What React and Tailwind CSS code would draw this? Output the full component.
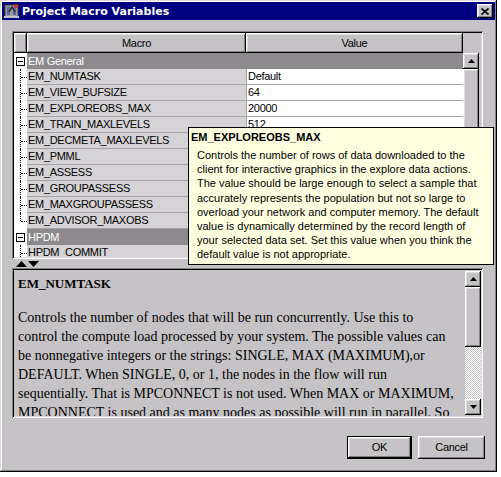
const raised =
  "shadow-[inset_-1px_-1px_#000,inset_1px_1px_#fff,inset_-2px_-2px_#848284,inset_2px_2px_#dedbde]"
const sunken =
  "shadow-[inset_1px_1px_#848284,inset_-1px_-1px_#fff,inset_2px_2px_#000,inset_-2px_-2px_#dedbde]"

const rows = [
  { group: "EM General" },
  { name: "EM_NUMTASK", value: "Default" },
  { name: "EM_VIEW_BUFSIZE", value: "64" },
  { name: "EM_EXPLOREOBS_MAX", value: "20000" },
  { name: "EM_TRAIN_MAXLEVELS", value: "512" },
  { name: "EM_DECMETA_MAXLEVELS", value: "" },
  { name: "EM_PMML", value: "" },
  { name: "EM_ASSESS", value: "" },
  { name: "EM_GROUPASSESS", value: "" },
  { name: "EM_MAXGROUPASSESS", value: "" },
  { name: "EM_ADVISOR_MAXOBS", value: "", last: true },
  { group: "HPDM" },
  { name: "HPDM_COMMIT", value: "" },
]

const tipLines = [
  "Controls the number of rows of data downloaded to the",
  "client for interactive graphics in the explore data actions.",
  "The value should be large enough to select a sample that",
  "accurately represents the population but not so large to",
  "overload your network and computer memory. The default",
  "value is dynamically determined by the record length of",
  "your selected data set. Set this value when you think the",
  "default value is not appropriate.",
]

const descLines = [
  "Controls the number of nodes that will be run concurrently. Use this to",
  "control the compute load processed by your system.  The possible values can",
  "be nonnegative integers or the strings: SINGLE, MAX (MAXIMUM),or",
  "DEFAULT. When SINGLE, 0, or 1, the nodes in the flow will run",
  "sequentially. That is MPCONNECT is not used. When MAX or MAXIMUM,",
  "MPCONNECT is used and as many nodes as possible will run in parallel. So",
]

const Arrow = ({ up }) => (
  <svg width="7" height="4" viewBox="0 0 7 4">
    <polygon points={up ? "3.5,0 7,4 0,4" : "0,0 7,0 3.5,4"} fill="#000" />
  </svg>
)

const ArrowButton = ({ up }) => (
  <div className={`w-[16px] h-[16px] bg-[#c6c3c6] flex items-center justify-center shrink-0 ${raised}`}>
    <Arrow up={up} />
  </div>
)

const TreeCell = ({ last }) => (
  <div className="relative w-[13px] h-full bg-white shrink-0">
    <div
      className={`absolute left-[6px] top-0 border-l border-dotted border-black ${
        last ? "h-[8px]" : "h-full"
      }`}
    />
    <div className="absolute left-[7px] top-[8px] w-[6px] border-t border-dotted border-black" />
  </div>
)

const Row = ({ row }) => {
  if (row.group) {
    return (
      <div className="flex h-[16px]">
        <div className="w-[13px] h-full bg-white flex items-center justify-center shrink-0">
          <div className="w-[9px] h-[9px] border border-black bg-white flex items-center justify-center">
            <div className="w-[5px] h-px bg-black" />
          </div>
        </div>
        <div className="flex-1 bg-[#8c8a8c] text-white pl-[1px] leading-[16px]">{row.group}</div>
      </div>
    )
  }
  return (
    <div className="flex h-[16px]">
      <TreeCell last={row.last} />
      <div className="w-[219px] bg-[#d6d3d6] border-b border-[#a5a2a5] pl-[1px] leading-[15px] shrink-0 whitespace-nowrap overflow-hidden">
        {row.name}
      </div>
      <div className="w-[217px] bg-white border-b border-l border-[#a5a2a5] pl-[1px] leading-[15px] shrink-0">
        {row.value}
      </div>
    </div>
  )
}

const App = () => {
  return (
    <div className="relative w-[501px] h-[477px] bg-white text-[11px] tracking-[-0.3px] text-black font-['Liberation_Sans',sans-serif]">
      <div className="w-[497px] h-[472px] bg-[#c6c3c6] p-[2px] flex flex-col shadow-[inset_-1px_-1px_#000,inset_1px_1px_#dedbde,inset_-2px_-2px_#848284,inset_2px_2px_#fff]">
        {/* title bar */}
        <div className="h-[18px] bg-[#000080] flex items-center pl-[2px] pr-[2px] shrink-0 tracking-normal">
          <svg width="16" height="16" viewBox="0 0 16 16" className="shrink-0">
            <rect x="1" y="2" width="13" height="12" fill="#9c9a9c" stroke="#424142" />
            <rect x="3" y="4" width="3" height="8" fill="#5a6d9c" />
            <rect x="9" y="4" width="3" height="8" fill="#5a6d9c" />
            <path d="M5 9 L8 4 L11 9" stroke="#333" strokeWidth="1.5" fill="none" />
            <circle cx="12" cy="3" r="2" fill="#d63030" />
            <rect x="0" y="13" width="15" height="2" fill="#c6c3c6" />
          </svg>
          <span className="ml-[2px] text-white font-bold text-[11px] font-['DejaVu_Sans',sans-serif] leading-none">
            Project Macro Variables
          </span>
          <div className={`ml-auto w-[16px] h-[14px] bg-[#c6c3c6] flex items-center justify-center ${raised}`}>
            <svg width="8" height="7" viewBox="0 0 8 7">
              <path d="M0.5 0.5 L7.5 6.5 M7.5 0.5 L0.5 6.5" stroke="#000" strokeWidth="1.6" />
            </svg>
          </div>
        </div>

        <div className="px-[10px] flex flex-col">
          {/* table */}
          <div className={`mt-[11px] w-[471px] h-[228px] p-[2px] bg-[#c6c3c6] ${sunken}`}>
            <div className="w-full h-full overflow-hidden flex flex-col">
              <div className="flex h-[20px] shrink-0">
                <div className={`w-[13px] h-full ${raised}`} />
                <div className={`w-[219px] h-full flex items-center justify-center ${raised}`}>Macro</div>
                <div className={`w-[217px] h-full flex items-center justify-center ${raised}`}>Value</div>
              </div>
              <div className="flex flex-1 min-h-0">
                <div className="w-[449px] overflow-hidden">
                  {rows.map((r, i) => (
                    <Row key={i} row={r} />
                  ))}
                </div>
                <div className="w-[16px] flex flex-col">
                  <ArrowButton up />
                  <div className={`h-[180px] bg-[#c6c3c6] ${raised}`} />
                  <div className="flex-1 bg-[#c6c3c6]" />
                </div>
              </div>
            </div>
          </div>

          {/* splitter */}
          <div className="h-[9px] flex items-center gap-[1px] pl-[4px]">
            <svg width="11" height="6" viewBox="0 0 11 6">
              <polygon points="5.5,0 11,6 0,6" fill="#000" />
            </svg>
            <svg width="11" height="6" viewBox="0 0 11 6">
              <polygon points="0,0 11,0 5.5,6" fill="#000" />
            </svg>
          </div>

          {/* description */}
          <div className={`w-[471px] h-[150px] p-[2px] bg-[#c6c3c6] ${sunken}`}>
            <div className="w-full h-full flex">
              <div className="flex-1 overflow-hidden pl-[4px] pt-[6px] font-['Liberation_Serif',serif] text-[14px] tracking-normal">
                <div className="font-bold text-[13px] leading-[16px] mb-[16px]">EM_NUMTASK</div>
                {descLines.map((l, i) => (
                  <div key={i} className="whitespace-nowrap leading-[19px]">
                    {l}
                  </div>
                ))}
              </div>
              <div className="w-[16px] flex flex-col pt-[1px] pb-[1px]">
                <ArrowButton up />
                <div className={`h-[60px] shrink-0 bg-[#c6c3c6] ${raised}`} />
                <div className="flex-1 bg-[image:repeating-conic-gradient(#fff_0%_25%,#c6c3c6_0%_50%)] bg-[length:2px_2px]" />
                <ArrowButton />
              </div>
            </div>
          </div>

          {/* buttons */}
          <div className="mt-[18px] flex justify-end gap-[6px]">
            <div className="w-[65px] h-[23px] border border-black">
              <div className={`w-full h-full bg-[#c6c3c6] flex items-center justify-center ${raised}`}>OK</div>
            </div>
            <div className={`w-[67px] h-[23px] bg-[#c6c3c6] flex items-center justify-center ${raised}`}>
              Cancel
            </div>
          </div>
        </div>
      </div>

      {/* tooltip */}
      <div className="absolute left-[188px] top-[127px] w-[306px] h-[138px] border border-black bg-[#ffffe1] text-[11px] tracking-normal">
        <div className="pl-[2px] pt-[1px] font-bold leading-[16px]">EM_EXPLOREOBS_MAX</div>
        <div className="pl-[8px] mt-[3px]">
          {tipLines.map((l, i) => (
            <div key={i} className="leading-[14.2px] whitespace-nowrap">
              {l}
            </div>
          ))}
        </div>
      </div>
    </div>
  )
}

export default App
